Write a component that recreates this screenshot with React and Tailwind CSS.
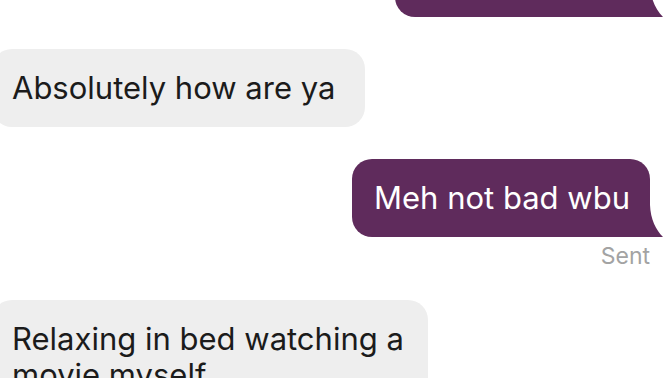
function Tail() {
    return (
        <svg
            className="absolute right-[-13px] bottom-0"
            width="13"
            height="32"
            viewBox="0 0 13 32"
        >
            <path d="M0 0 C0.5 14 6 25 13 32 L0 32 Z" fill="#5f2b5c" />
        </svg>
    )
}

function Sent({ children, className }) {
    return (
        <div className={`relative self-end rounded-[20px] rounded-br-none bg-[#5f2b5c] px-[22px] py-[21px] text-white ${className || ''}`}>
            <span className="whitespace-nowrap">{children}</span>
            <Tail />
        </div>
    )
}

function Received({ children, className }) {
    return (
        <div className={`ml-[-8px] self-start rounded-[20px] bg-[#eeeeee] py-[21px] pl-[20px] text-[#1b1b1b] ${className || ''}`}>
            <span className="whitespace-nowrap">{children}</span>
        </div>
    )
}

export default function App() {
    return (
        <div
            className="h-[378px] w-[672px] overflow-hidden bg-white"
            style={{ fontFamily: 'Inter, "Noto Sans", sans-serif' }}
        >
            <div className="flex flex-col pr-[22px] text-[31px] leading-[36px]">
                {/* previous message, scrolled mostly out of view */}
                <div className="relative mt-[-61px] h-[78px] w-[255px] self-end rounded-[20px] rounded-br-none bg-[#5f2b5c]">
                    <Tail />
                </div>

                <Received className="mt-[32px] w-[373px]">Absolutely how are ya</Received>

                <Sent className="mt-[32px] w-[298px]">Meh not bad wbu</Sent>
                <div className="mt-[5px] self-end text-[23px] leading-[28px] text-[#a3a3a3]">Sent</div>

                <Received className="mt-[30px] w-[436px]">
                    Relaxing in bed watching a
                    <br />
                    movie myself
                </Received>
            </div>
        </div>
    )
}
